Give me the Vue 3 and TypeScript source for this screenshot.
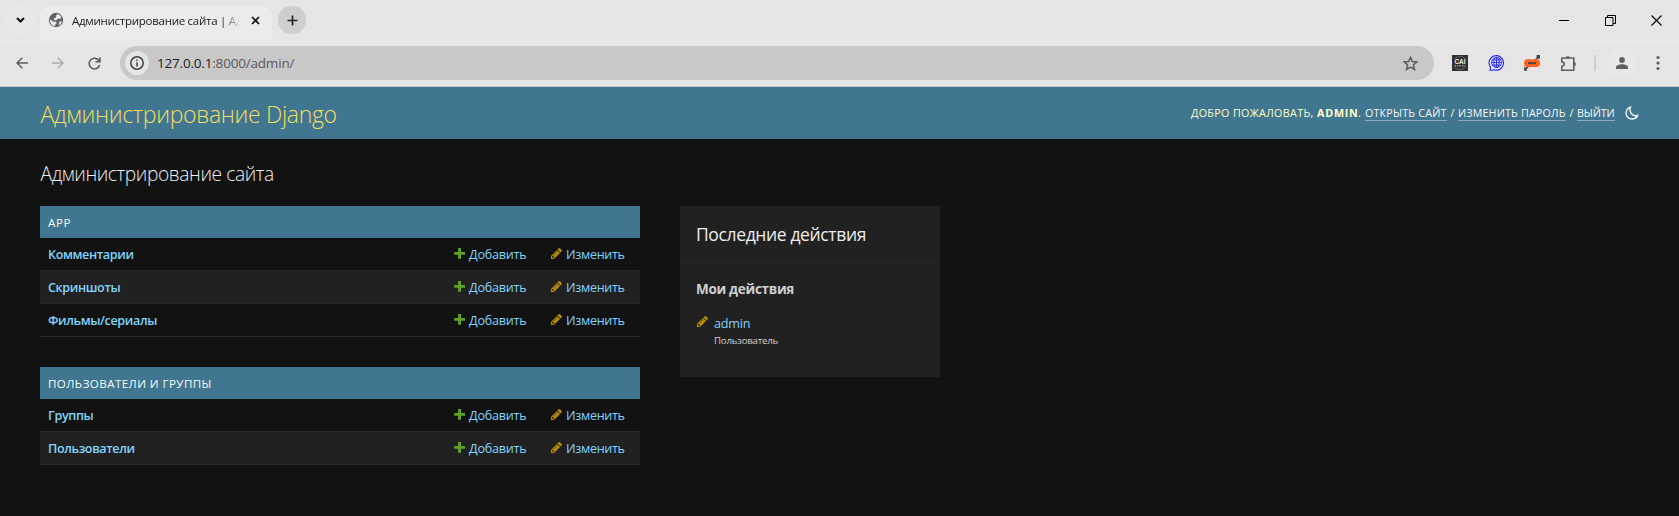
<script setup lang="ts">
interface Model { name: string }
interface AppModule { caption: string; cls: string; models: Model[] }

const modules: AppModule[] = [
  { caption: 'APP', cls: 'short', models: [{ name: 'Комментарии' }, { name: 'Скриншоты' }, { name: 'Фильмы/сериалы' }] },
  { caption: 'ПОЛЬЗОВАТЕЛИ И ГРУППЫ', cls: 'long', models: [{ name: 'Группы' }, { name: 'Пользователи' }] },
]
const pencil = 'M491 1536l91-91-235-235-91 91v107h128v128h107zm523-928q0-22-22-22-10 0-17 7l-542 542q-7 7-7 17 0 22 22 22 10 0 17-7l542-542q7-7 7-17zm-54-192l416 416-832 832h-416v-416zm683 96q0 53-37 90l-166 166-416-416 166-165q36-38 90-38 53 0 91 38l235 234q37 39 37 91z'
</script>

<template>
  <div class="window">
    <div class="tabstrip">
      <div class="search"><svg width="9" height="6" viewBox="0 0 9 6"><path d="M1 1l3.5 3.5L8 1" fill="none" stroke="#111" stroke-width="2" /></svg></div>
      <div class="tab">
        <svg class="globe" width="16" height="16" viewBox="0 0 16 16"><circle cx="8" cy="8" r="7.2" fill="#5f6368" /><path d="M9.2 2.1C11 2.4 12.6 3.6 13.4 5.300L12.200 6.800H9.700L8.500 8.200H6.200L5.900 6.300L8.100 5.400V3.700ZM1.900 6.900L5 9.500L7.900 9.700L9 11.100L7.300 12.300V14C4.300 13.900 1.700 11.400 1.900 6.900ZM11.500 9.300L13.900 9.400C13.400 11.300 12.300 12.600 10.800 13.300Z" fill="#ebebeb" /></svg>
        <span class="tab-title">Администрирование сайта | Ад</span>
        <svg class="close" width="9" height="9" viewBox="0 0 9 9"><path d="M1 1l7 7M8 1L1 8" stroke="#111" stroke-width="1.7" /></svg>
      </div>
      <div class="newtab"><svg width="11" height="11" viewBox="0 0 11 11"><path d="M5.500 0.500v10M.5 5.500h10" stroke="#222" stroke-width="1.700" /></svg></div>
      <div class="controls">
        <svg width="10" height="11" viewBox="0 0 10 11"><path d="M0 5.500h10" stroke="#000" /></svg>
        <svg width="11" height="11" viewBox="0 0 11 11"><path d="M.5 2.500h7.500v8H.5zM2.500 2.500v-2h8v8H8" fill="none" stroke="#000" /></svg>
        <svg width="11" height="11" viewBox="0 0 11 11"><path d="M.5.5l10 10M10.500.5l-10 10" stroke="#000" stroke-width="1.100" /></svg>
      </div>
    </div>
    <div class="toolbar">
      <div class="nav">
        <svg width="12" height="12" viewBox="0 0 12 12"><path d="M12 6H1M6.300.7L1 6l5.300 5.300" fill="none" stroke="#5b5e62" stroke-width="1.500" /></svg>
        <svg width="12" height="12" viewBox="0 0 12 12"><path d="M0 6h11M5.700.7L11 6l-5.300 5.300" fill="none" stroke="#ababab" stroke-width="1.500" /></svg>
        <svg class="reload" width="13" height="13" viewBox="0 0 13 13"><path d="M11.200 4.200A5.300 5.300 0 1 0 11.600 8M11.900.3v4.500H7.400" fill="none" stroke="#5b5e62" stroke-width="1.600" /></svg>
      </div>
      <div class="omnibox">
        <div class="info"><svg width="14" height="14" viewBox="0 0 14 14"><circle cx="7" cy="7" r="6.200" fill="none" stroke="#3c4043" stroke-width="1.500" /><path d="M7 6.200v4.300M7 3.500V5" stroke="#3c4043" stroke-width="1.500" /></svg></div>
        <span class="url"><span class="host">127.0.0.1</span>:8000/admin/</span>
        <svg class="star" width="15" height="15" viewBox="0 0 15 15"><path d="M7.500 1.300l1.800 4.200 4.600.4-3.500 3 1.100 4.500-4-2.400-4 2.400 1.100-4.500-3.500-3 4.600-.4z" fill="none" stroke="#5b5e62" stroke-width="1.500" /></svg>
      </div>
      <svg class="ext cai" width="16" height="16" viewBox="0 0 16 16"><rect width="16" height="16" fill="#303030" /><circle cx="8" cy="8" r="6.700" fill="none" stroke="#777" stroke-width=".7" /><rect x="1" y="4" width="14" height="8" fill="#303030" /><text x="8" y="8.900" text-anchor="middle" font-size="6.500" font-weight="700" fill="#eee">CAI</text><path d="M2.500 10.800h11" stroke="#999" stroke-width="1.500" stroke-dasharray="1.500 1" /></svg>
      <svg class="ext geo" width="16" height="16" viewBox="0 0 16 16"><path d="M2 15.300l.6-3A7.200 7.200 0 1 1 6 14.700q-2 .7-4 .6z" fill="#ececff" stroke="#1d20ee" stroke-width="1.100" /><ellipse cx="8.500" cy="7.500" rx="2.600" ry="5" fill="none" stroke="#1d20ee" stroke-width=".9" /><path d="M8.500 2.500v10M3.500 7.500h10M4.300 5h8.400M4.300 10h8.400" stroke="#1d20ee" stroke-width=".9" /><circle cx="8.500" cy="7.500" r="5" fill="none" stroke="#1d20ee" stroke-width=".9" /></svg>
      <svg class="ext link" width="16" height="16" viewBox="0 0 16 16"><path d="M0 15.800v-4l1.300 1.300 2-2.200 1.300 1.300-2.200 2 1.100 1.600zM16 0v3.800h-2.500l-2 2.200-1.200-1.200 2.300-2V0z" fill="#444" /><rect y="4.300" width="16" height="7.800" rx="3.600" fill="#ff611f" /><path d="M4 8.200h8" stroke="#444" stroke-width="2" /></svg>
      <svg class="ext puzzle" width="17" height="17" viewBox="0 0 17 17"><path d="M1.800 3h12v12.200h-12v-3.900q2.500-.4 2.500-2.200T1.800 6.900z" fill="none" stroke="#5b5e62" stroke-width="1.600" stroke-linejoin="round" /><path d="M6 3a1.800 1.800 0 0 1 3.600 0zM14 7.300a1.800 1.800 0 0 1 0 3.600z" fill="#5b5e62" stroke="#5b5e62" stroke-width=".4" /></svg>
      <i class="sep"></i>
      <div class="profile"><svg width="12" height="12" viewBox="0 0 12 12"><circle cx="6" cy="3" r="2.900" fill="#5f6062" /><path d="M0 12v-1.800C0 8.200 3.400 7.200 6 7.200s6 1 6 3V12z" fill="#5f6062" /></svg></div>
      <svg class="menu" width="4" height="16" viewBox="0 0 4 16"><circle cx="2" cy="2.500" r="1.600" /><circle cx="2" cy="8" r="1.600" /><circle cx="2" cy="13.500" r="1.600" /></svg>
    </div>

    <header class="header">
      <div class="brand">Администрирование Django</div>
      <div class="user">
        <span class="hello">ДОБРО ПОЖАЛОВАТЬ,</span>
        <strong>ADMIN</strong><span class="dot">.</span>
        <a class="site">ОТКРЫТЬ САЙТ</a><span class="slash">/</span>
        <a class="pass">ИЗМЕНИТЬ ПАРОЛЬ</a><span class="slash">/</span>
        <a class="exit">ВЫЙТИ</a>
        <svg class="moon" width="16" height="16" viewBox="0 0 24 24"><path d="M10 7A8 8 0 0 0 18 15A8.100 8.100 0 0 0 22.080 13.880A10 10 0 0 1 12 22C6.477 22 2 17.523 2 12A10 10 0 0 1 11.700 2A7.900 7.900 0 0 0 10 7ZM4 12A8 8 0 0 0 12 20A8 8 0 0 0 17.800 17.100C12.400 17 8 12.600 8 7Q8 6 8.200 5A8 8 0 0 0 4 12Z" fill="#f5f9fa" /></svg>
      </div>
    </header>

    <main class="content">
      <h1>Администрирование сайта</h1>
      <div class="columns">
        <div class="modules">
          <section v-for="m in modules" :key="m.caption" class="module">
            <h2 :class="m.cls">{{ m.caption }}</h2>
            <div v-for="row in m.models" :key="row.name" class="row">
              <a class="name">{{ row.name }}</a>
              <a class="add"><svg width="12" height="12" viewBox="0 0 12 12"><path d="M4.100 1h2.900v3.900h4v2.900H7v3.900H4.100V7.800H.2V4.900h3.900z" fill="#5fa225" /></svg>Добавить</a>
              <a class="edit"><svg width="13" height="13" viewBox="0 0 1792 1792"><path :d="pencil" fill="#b48c08" /></svg>Изменить</a>
            </div>
          </section>
        </div>
        <aside class="recent">
          <h2>Последние действия</h2>
          <h3>Мои действия</h3>
          <div class="action">
            <svg width="13" height="13" viewBox="0 0 1792 1792"><path :d="pencil" fill="#b48c08" /></svg>
            <div><a>admin</a><span class="kind">Пользователь</span></div>
          </div>
        </aside>
      </div>
    </main>
  </div>
</template>

<style>
body { margin: 0; background: #121212; }
</style>
<style scoped>
.window { height: 516px; overflow: hidden; background: #121212; color: #eee; font-family: "Open Sans", "Noto Sans", sans-serif; }
.window * { box-sizing: border-box; }
svg { display: block; flex: none; }
h1, h2, h3 { margin: 0; }
.tabstrip { height: 40px; display: flex; align-items: flex-start; background: #e5e5e5; padding-left: 6px; }
.search { width: 28px; height: 28px; margin-top: 6px; border-radius: 9px; background: #e8e8e8; display: flex; align-items: center; justify-content: center; }
.tab { width: 232px; height: 34px; margin: 6px 0 0 6px; background: #ebebeb; border-radius: 9px 9px 0 0; display: flex; align-items: flex-start; padding: 6px 12px 0 8px; color: #1b1b1b; }
.tab-title { flex: none; width: 172px; margin: 0 7px 0 8px; line-height: 17px; white-space: nowrap; font-size: 11.5px; letter-spacing: -.27px; -webkit-mask-image: linear-gradient(90deg, #000 150px, transparent 168px); mask-image: linear-gradient(90deg, #000 150px, transparent 168px); }
.close { margin-top: 4px; }
.newtab { width: 28px; height: 28px; margin: 6px 0 0 6px; border-radius: 50%; background: #cecece; display: flex; align-items: center; justify-content: center; }
.controls { margin: 15px 17px 0 auto; display: flex; gap: 35px; }
.controls svg:first-child { margin-right: 1px; }
.toolbar { height: 47px; display: flex; align-items: center; background: linear-gradient(#eaeaea, #e5e5e5 10px, #e5e5e5); border-bottom: 1px solid #c5c5c5; }
.nav { display: flex; align-items: center; gap: 24px; padding-left: 16px; width: 120px; }
.omnibox { width: 1314px; height: 34px; border-radius: 17px; background: #c8c8c8; display: flex; align-items: center; padding: 0 16px 0 5px; }
.info { width: 24px; height: 24px; border-radius: 50%; background: #e5e5e5; display: flex; align-items: center; justify-content: center; }
.url { margin-left: 8px; font-size: 13.5px; letter-spacing: -.19px; color: #585b5e; }
.host { color: #202124; }
.star { margin-left: auto; }
.ext { margin-left: 20px; }
.cai { margin-left: 18px; font-family: "Liberation Sans", sans-serif; }
.puzzle { margin-left: 20px; }
.sep { width: 2px; height: 16px; background: #cdcdcd; margin-left: 17px; }
.profile { width: 30px; height: 30px; margin-left: 11px; border-radius: 50%; background: #e8e8e8; display: flex; align-items: center; justify-content: center; }
.menu { margin-left: 19px; fill: #5b5e62; }

.header { height: 52px; background: #417690; display: flex; align-items: center; justify-content: space-between; padding: 0 39px 0 40px; }
.brand { font-size: 23px; font-weight: 300; letter-spacing: -.31px; line-height: 52px; color: #f5dd5d; white-space: nowrap; padding: 2px 0 0 .5px; }
.user { display: flex; align-items: center; white-space: nowrap; font-size: 10.7px; line-height: 16px; color: #ffffcc; }
.hello { letter-spacing: .37px; width: 126px; }
.user strong { letter-spacing: .8px; width: 41px; }
.dot { width: 7px; }
.user a { color: #f5f9fa; border-bottom: 1px solid #8eabbb; height: 16px; line-height: 16px; }
.site { width: 82px; letter-spacing: .2px; }
.pass { width: 108px; letter-spacing: .18px; }
.exit { width: 38px; letter-spacing: -.1px; }
.slash { width: 11px; text-align: center; }
.moon { margin-left: 9px; }

.content { padding: 20px 40px 0; }
h1 { height: 47px; font-size: 19.2px; line-height: 30px; font-weight: 300; letter-spacing: -.39px; padding-left: .5px; }
.columns { display: flex; align-items: flex-start; gap: 40px; }
.modules { width: 600px; display: flex; flex-direction: column; gap: 30px; }
.module h2 { height: 32px; padding: 1px 8px 0; background: #417690; color: #f7fafa; font-size: 11.6px; line-height: 31px; font-weight: 400; }
.short { letter-spacing: .6px; }
.long { letter-spacing: .42px; }
.row { height: 33px; padding: 0 0 0 8px; display: flex; line-height: 34px; border-bottom: 1px solid #292929; font-size: 12.6px; color: #81d4fa; }
.row:nth-child(odd) { background: #212121; }
.name { width: 406px; font-weight: 600; letter-spacing: -.38px; }
.add, .edit { display: flex; letter-spacing: -.24px; }
.edit { letter-spacing: -.33px; }
.add { width: 96px; }
.add svg { margin: 9px 3px 0 0; }
.edit svg { margin: 9px 3px 0 0; }
.recent { width: 260px; height: 171px; background: #212121; }
.recent h2 { height: 57px; border-bottom: 1px solid #292929; padding-left: 16px; font-size: 17.500px; font-weight: 400; letter-spacing: -.37px; line-height: 56px; }
.recent h3 { padding: 16px 16px 0; font-size: 13.500px; letter-spacing: -.3px; line-height: 20px; color: #d0d0d0; }
.action { display: flex; gap: 5px; padding: 16px 16px 0; }
.action a { display: block; font-size: 12.600px; letter-spacing: -.2px; line-height: 16px; margin-top: 1px; color: #81d4fa; }
.kind { display: block; font-size: 9.700px; letter-spacing: -.23px; line-height: 14px; margin-top: 2px; color: #d0d0d0; }
</style>
